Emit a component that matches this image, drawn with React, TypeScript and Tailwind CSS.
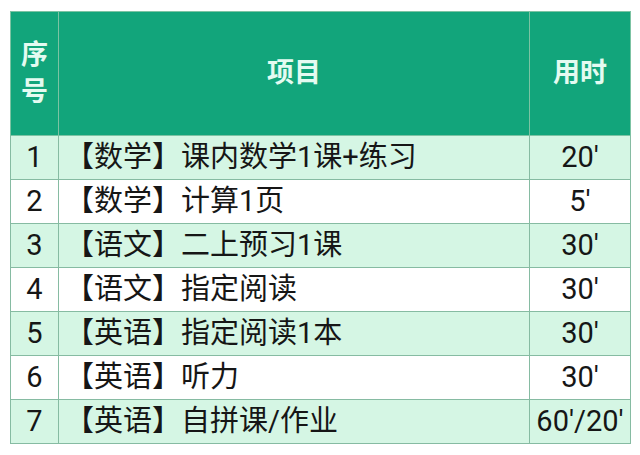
const rows = [
  { no: "1", item: "【数学】课内数学1课+练习", time: "20'" },
  { no: "2", item: "【数学】计算1页", time: "5'" },
  { no: "3", item: "【语文】二上预习1课", time: "30'" },
  { no: "4", item: "【语文】指定阅读", time: "30'" },
  { no: "5", item: "【英语】指定阅读1本", time: "30'" },
  { no: "6", item: "【英语】听力", time: "30'" },
  { no: "7", item: "【英语】自拼课/作业", time: "60'/20'" },
];

const App = () => {
  return (
    <div
      className="w-[640px] h-[455px] bg-white pt-[11px] pl-[10px]"
      style={{ fontFamily: "Roboto, 'Noto Sans CJK SC', sans-serif" }}
    >
      <table className="w-[620px] border-collapse table-fixed text-[#161616]">
        <colgroup>
          <col className="w-[48px]" />
          <col className="w-[471px]" />
          <col className="w-[101px]" />
        </colgroup>
        <thead>
          <tr className="h-[124px] bg-[#12a57b] text-[#e4fbf1] text-[27px] font-bold">
            <th className="border border-[#7cc3a3] leading-[37px] p-0">
              序<br />号
            </th>
            <th className="border border-[#7cc3a3] p-0">项目</th>
            <th className="border border-[#7cc3a3] p-0">用时</th>
          </tr>
        </thead>
        <tbody className="text-[29px]">
          {rows.map((r, i) => (
            <tr
              key={r.no}
              className={`h-[44px] ${i % 2 === 0 ? "bg-[#d5f6e4]" : "bg-white"}`}
            >
              <td className="border border-[#86bba2] text-center p-0 leading-none">
                {r.no}
              </td>
              <td className="border border-[#86bba2] pl-[6px] p-0 leading-none whitespace-nowrap">
                {r.item}
              </td>
              <td className="border border-[#86bba2] text-center p-0 leading-none whitespace-nowrap">
                {r.time}
              </td>
            </tr>
          ))}
        </tbody>
      </table>
    </div>
  );
};

export default App;
